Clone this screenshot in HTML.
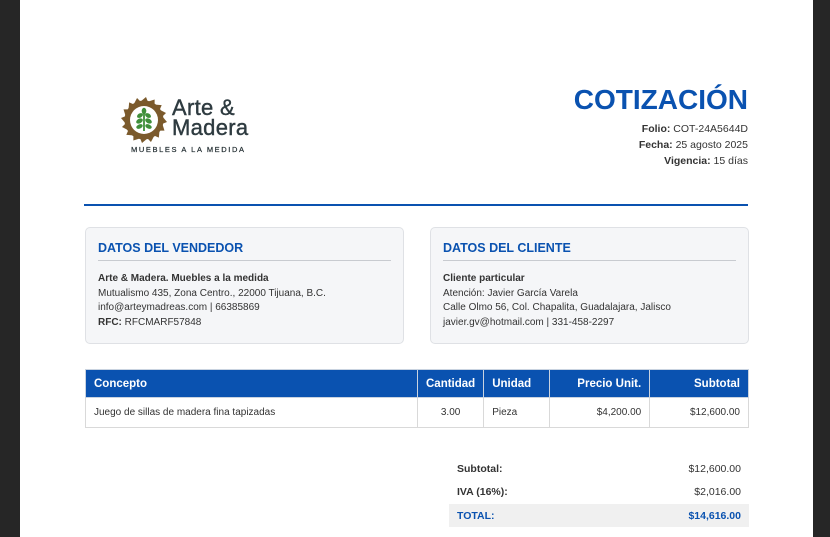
<!DOCTYPE html>
<html><head><meta charset="utf-8"><style>
*{margin:0;padding:0;box-sizing:border-box}
body{width:830px;height:537px;background:#262626;font-family:"Liberation Sans",sans-serif;position:relative;overflow:hidden;color:#333}
.page{position:absolute;left:20px;top:0;width:793px;height:537px;background:#fff}
.a{position:absolute}
.box{position:absolute;top:227px;width:319px;height:117px;background:#f5f6f8;border:1px solid #dfe1e5;border-radius:5px}
.box h3{position:absolute;left:12px;top:13px;font-size:12.5px;color:#0a52b0;font-weight:bold}
.box .ln{position:absolute;left:12px;right:12px;top:32px;border-top:1px solid #c8cbd0}
.box .t{position:absolute;left:12px;top:44px;font-size:10px;line-height:14.7px;color:#333}
table{position:absolute;left:85px;top:369px;width:664px;border-collapse:collapse;font-size:10px}
th{background:#0a52b0;color:#fff;font-size:11.5px;height:28px;border:1px solid #c9d3e0;padding:0 8px;text-align:left}
td{height:30px;border:1px solid #d9d9d9;padding:0 8px;color:#333}
.r{text-align:right}.c{text-align:center}
.tot{position:absolute;left:449px;width:300px;height:23px;font-size:10.5px;line-height:23px}
.tot b{position:absolute;left:8px}.tot span{position:absolute;right:8px}
</style></head><body>
<div class="page"></div>
<svg class="a" style="left:121px;top:97px" width="46" height="46" viewBox="-23 -23 46 46">
<g fill="#7b5a2c">
<circle r="19.5"/>
<polygon points="-4,-18 4,-18 2,-23"/>
<polygon points="-4,-18 4,-18 2,-23" transform="rotate(22.5)"/><polygon points="-4,-18 4,-18 2,-23" transform="rotate(45)"/><polygon points="-4,-18 4,-18 2,-23" transform="rotate(67.5)"/><polygon points="-4,-18 4,-18 2,-23" transform="rotate(90)"/><polygon points="-4,-18 4,-18 2,-23" transform="rotate(112.5)"/><polygon points="-4,-18 4,-18 2,-23" transform="rotate(135)"/><polygon points="-4,-18 4,-18 2,-23" transform="rotate(157.5)"/><polygon points="-4,-18 4,-18 2,-23" transform="rotate(180)"/><polygon points="-4,-18 4,-18 2,-23" transform="rotate(202.5)"/><polygon points="-4,-18 4,-18 2,-23" transform="rotate(225)"/><polygon points="-4,-18 4,-18 2,-23" transform="rotate(247.5)"/><polygon points="-4,-18 4,-18 2,-23" transform="rotate(270)"/><polygon points="-4,-18 4,-18 2,-23" transform="rotate(292.5)"/><polygon points="-4,-18 4,-18 2,-23" transform="rotate(315)"/><polygon points="-4,-18 4,-18 2,-23" transform="rotate(337.5)"/>
</g>
<circle r="14" fill="#fff"/>
<g fill="#3f8f3a"><rect x="-0.9" y="-8" width="1.8" height="19"/>
<ellipse cx="0" cy="-9" rx="2.3" ry="3.2"/>
<ellipse cx="-4" cy="-4.5" rx="3.2" ry="2.1" transform="rotate(-30 -4 -4.5)"/><ellipse cx="4" cy="-4.5" rx="3.2" ry="2.1" transform="rotate(30 4 -4.5)"/>
<ellipse cx="-4.5" cy="1" rx="3.6" ry="2.3" transform="rotate(-30 -4.5 1)"/><ellipse cx="4.5" cy="1" rx="3.6" ry="2.3" transform="rotate(30 4.5 1)"/>
<ellipse cx="-4.5" cy="6.5" rx="3.4" ry="2.1" transform="rotate(-25 -4.5 6.5)"/><ellipse cx="4.5" cy="6.5" rx="3.4" ry="2.1" transform="rotate(25 4.5 6.5)"/></g>
</svg>
<div class="a" style="left:172px;top:98px;font-size:22px;line-height:20px;color:#2e3b40;letter-spacing:0.3px;-webkit-text-stroke:0.4px #2e3b40">Arte &amp;<br>Madera</div>
<div class="a" style="left:131px;top:145px;font-size:7.5px;letter-spacing:1.6px;color:#1f2a2e;-webkit-text-stroke:0.2px #1f2a2e">MUEBLES A LA MEDIDA</div>
<div class="a" style="right:82px;top:84px;font-size:28px;font-weight:bold;color:#0a52b0">COTIZACIÓN</div>
<div class="a" style="right:82px;top:122px;font-size:10.5px;line-height:15.8px;text-align:right;color:#333"><b>Folio:</b> COT-24A5644D<br><b>Fecha:</b> 25 agosto 2025<br><b>Vigencia:</b> 15 días</div>
<div class="a" style="left:84px;top:204px;width:664px;height:2px;background:#0a52b0"></div>
<div class="box" style="left:85px"><h3>DATOS DEL VENDEDOR</h3><div class="ln"></div><div class="t"><b>Arte &amp; Madera. Muebles a la medida</b><br>Mutualismo 435, Zona Centro., 22000 Tijuana, B.C.<br>info@arteymadreas.com | 66385869<br><b>RFC:</b> RFCMARF57848</div></div>
<div class="box" style="left:430px"><h3>DATOS DEL CLIENTE</h3><div class="ln"></div><div class="t"><b>Cliente particular</b><br>Atención: Javier García Varela<br>Calle Olmo 56, Col. Chapalita, Guadalajara, Jalisco<br>javier.gv@hotmail.com | 331-458-2297</div></div>
<table><tr><th style="width:332px">Concepto</th><th style="width:66px" class="c">Cantidad</th><th style="width:66px">Unidad</th><th style="width:100px" class="r">Precio Unit.</th><th class="r">Subtotal</th></tr>
<tr><td>Juego de sillas de madera fina tapizadas</td><td class="c">3.00</td><td>Pieza</td><td class="r">$4,200.00</td><td class="r">$12,600.00</td></tr></table>
<div class="tot" style="top:458px"><b>Subtotal:</b><span>$12,600.00</span></div>
<div class="tot" style="top:481px"><b>IVA (16%):</b><span>$2,016.00</span></div>
<div class="tot" style="top:504px;background:#f0f0f0;color:#0a52b0;line-height:24px"><b>TOTAL:</b><span style="font-weight:bold">$14,616.00</span></div>
</body></html>
